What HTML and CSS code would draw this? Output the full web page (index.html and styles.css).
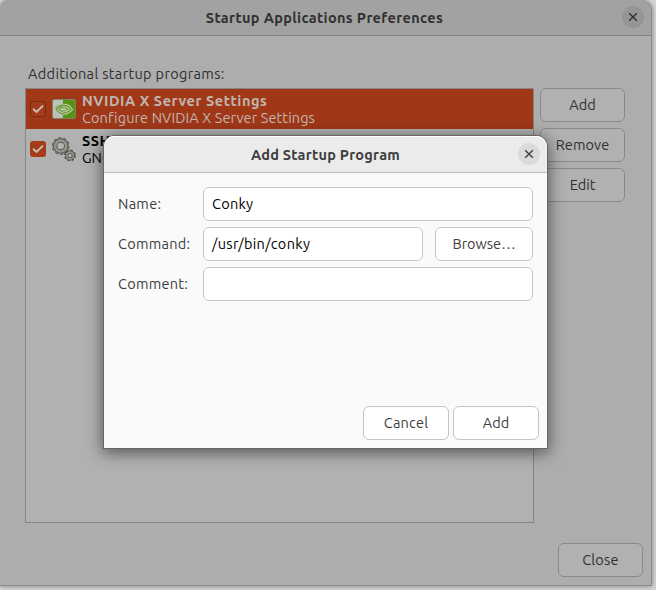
FILE: index.html
```html
<!DOCTYPE html>
<html lang="en">
<head>
<meta charset="utf-8">
<title>Startup Applications Preferences</title>
<link rel="stylesheet" href="styles.css">
</head>
<body>
<main class="window">
  <header class="titlebar">
    <h1><span class="t-main">Startup Applications Preferences</span></h1>
    <button class="close" aria-label="Close window"><svg viewBox="0 0 10 10"><path d="M1.2 1.2l7.6 7.6M8.8 1.2L1.2 8.8"/></svg></button>
  </header>
  <section class="content">
    <p class="list-label"><span class="t-label">Additional startup programs:</span></p>
    <div class="columns">
      <div class="list">
        <div class="row selected">
          <span class="check"><svg viewBox="0 0 16 16"><path d="M3 7.7l3.5 3.2L13 4.6"/></svg></span>
          <svg class="app-icon" viewBox="0 0 24 24">
            <rect x=".5" y="2.5" width="23" height="19" rx="1.8" fill="#bdc2b8"/>
            <path d="M11 3h11q1.500 0 1.500 1.500v15q0 1.500-1.500 1.500H11z" fill="#559310"/>
            <rect x=".5" y="2.500" width="23" height="19" rx="1.800" fill="none" stroke="#7a8468"/>
            <g fill="none" stroke-width="1.300">
              <path stroke="#6b9c33" d="M11 8Q6 9 4 11.500Q6 16 11 17M11 10Q8.300 10.300 7 11.700Q8.500 14.500 11 14.700"/>
              <path stroke="#b4c59c" d="M11 7.500Q17 6.500 20.500 12.500Q16 17.500 11 17M11 9.800Q15 9.500 17.500 12Q14.500 15.500 11 14.700M11 11.800q2.300-.4 3 .7-1.400 1.200-3 .3"/>
            </g>
          </svg>
          <div class="text"><b class="t-nv">NVIDIA X Server Settings</b><span class="t-conf">Configure NVIDIA X Server Settings</span></div>
        </div>
        <div class="row">
          <span class="check"><svg viewBox="0 0 16 16"><path d="M3 7.700l3.500 3.200L13 4.600"/></svg></span>
          <svg class="app-icon" viewBox="0 0 24 24" fill="none">
            <circle cx="8.700" cy="9" r="7.700" stroke="#51514f" stroke-width="2.200" stroke-dasharray="2.900 1.938"/>
            <circle cx="8.700" cy="9" r="5.500" stroke="#555553" stroke-width="4.400"/>
            <circle cx="8.700" cy="9" r="5.500" stroke="#96968c" stroke-width="2.500"/>
            <circle cx="8.700" cy="9" r="7.500" stroke="#8a8a82" stroke-width="1" stroke-dasharray="1.500 3.212" stroke-dashoffset="-.7"/>
            <circle cx="18" cy="18.500" r="5" stroke="#51514f" stroke-width="1.900" stroke-dasharray="2.200 1.727"/>
            <circle cx="18" cy="18.500" r="3.400" stroke="#555553" stroke-width="3.200"/>
            <circle cx="18" cy="18.500" r="3.400" stroke="#96968c" stroke-width="1.600"/>
          </svg>
          <div class="text"><b class="t-ssh">SSH Key Agent</b><span class="t-gn">GNOME Keyring: SSH Agent</span></div>
        </div>
      </div>
      <div class="actions">
        <button class="btn"><span>Add</span></button>
        <button class="btn"><span class="t-remove">Remove</span></button>
        <button class="btn"><span>Edit</span></button>
      </div>
    </div>
    <footer class="footer"><button class="btn"><span class="t-close">Close</span></button></footer>
  </section>
</main>
<section class="dialog" role="dialog" aria-label="Add Startup Program">
  <header class="titlebar">
    <h1><span class="t-dialog">Add Startup Program</span></h1>
    <button class="close" aria-label="Close dialog"><svg viewBox="0 0 10 10"><path d="M1.200 1.200l7.600 7.600M8.800 1.200L1.200 8.800"/></svg></button>
  </header>
  <div class="form">
    <label><span class="t-field">Name:</span></label><div class="field wide"><span class="t-field">Conky</span></div>
    <label><span class="t-field">Command:</span></label><div class="field"><span class="t-path">/usr/bin/conky</span></div><button class="btn"><span>Browse…</span></button>
    <label><span class="t-field">Comment:</span></label><div class="field wide"></div>
  </div>
  <footer class="dialog-actions"><button class="btn"><span class="t-cancel">Cancel</span></button><button class="btn"><span>Add</span></button></footer>
</section>
</body>
</html>
```
FILE: styles.css
```css
* { box-sizing: border-box; }
body {
  margin: 0;
  width: 656px;
  height: 590px;
  overflow: hidden;
  background: #d5d5d5;
  font: 14.5px/17px Ubuntu, "Noto Sans", sans-serif;
  color: #303030;
}
h1, p { margin: 0; }
button { font: inherit; color: inherit; padding: 0; }
span, b { white-space: nowrap; }
.window {
  width: 652px;
  height: 586px;
  background: #adadad;
  border: solid #898989;
  border-width: 0 1px 1px 0;
  border-radius: 9px 11px 0 0;
  box-shadow: 0 0 5px #777;
}
.titlebar {
  position: relative;
  height: 36px;
  display: flex;
  align-items: center;
  justify-content: center;
  background: #a2a2a2;
  border-bottom: 1px solid #858585;
  border-radius: 9px 11px 0 0;
}
h1 { font-size: 14.5px; line-height: 18px; }
.window h1 { margin-right: 2px; }
.close {
  position: absolute;
  right: 7px;
  top: 6px;
  width: 22px;
  height: 22px;
  border: 0;
  border-radius: 50%;
  background: #959595;
  display: grid;
  place-items: center;
}
.close svg { width: 10px; height: 10px; fill: none; stroke: #303030; stroke-width: 1.4; }
.content { padding: 29px 8px 0 25px; }
.list-label { padding-left: 3px; height: 23px; line-height: 18px; }
.columns { display: flex; gap: 6px; }
.list {
  width: 509px;
  height: 435px;
  border: 1px solid #858585;
  background: #b1b1b1;
  color: #000;
}
.row { height: 40px; display: flex; align-items: center; padding-left: 4px; }
.selected { background: #a03818; color: #c0b5b0; }
.check {
  width: 16px;
  height: 16px;
  border-radius: 3px;
  background: #a63b19;
  margin-right: 6px;
}
.selected .check { box-shadow: 0 0 0 1px #772b14 inset; }
.check svg { display: block; fill: none; stroke: #c6bdb9; stroke-width: 2; }
.app-icon { width: 24px; height: 24px; margin-right: 6px; }
.text { display: flex; flex-direction: column; align-items: flex-start; }
.actions { display: flex; flex-direction: column; gap: 6px; }
.btn {
  width: 85px;
  height: 34px;
  border: 1px solid #898989;
  border-radius: 6px;
  background: #b1b1b1;
  display: flex;
  align-items: center;
  justify-content: center;
  padding-bottom: 2px;
}
.footer { display: flex; justify-content: flex-end; margin-top: 20px; }
.dialog {
  position: absolute;
  left: 104px;
  top: 136px;
  width: 443px;
  height: 312px;
  background: #fafafa;
  border-radius: 11px 11px 0 0;
  box-shadow: 0 0 0 1px #666, 0 3px 16px 2px rgba(0, 0, 0, .5);
  color: #3d3d3d;
}
.dialog .titlebar {
  height: 37px;
  padding-top: 2px;
  background: #ebebeb;
  border-color: #bdbdbd;
  border-radius: 11px 11px 0 0;
  box-shadow: inset 0 1px #fff;
}
.dialog .close { top: 7px; background: #dadada; }
.dialog .close svg { stroke: #3d3d3d; }
.form {
  display: grid;
  grid-template-columns: 85px 220px 110px;
  grid-template-rows: repeat(3, 34px);
  row-gap: 6px;
  padding: 14px 14px 0;
}
.form label { display: flex; align-items: center; padding-bottom: 2px; }
.field {
  border: 1px solid #c5c5c5;
  border-radius: 6px;
  background: #fff;
  color: #000;
  display: flex;
  align-items: center;
  padding: 0 0 2px 8px;
}
.wide { grid-column: 2 / 4; }
.dialog .btn { background: #fff; border-color: #c5c5c5; }
.form .btn { width: 98px; margin-left: 12px; }
.dialog-actions { display: flex; justify-content: flex-end; gap: 4px; padding: 105px 8px 0 0; }
.dialog-actions .btn { width: 86px; }
.t-main { letter-spacing: .36px; }
.t-label { letter-spacing: .34px; }
.t-nv, .t-ssh { letter-spacing: .55px; }
.t-conf { letter-spacing: .1px; }
.t-dialog { letter-spacing: .25px; }
.t-field { letter-spacing: .28px; }
.t-path { letter-spacing: .34px; }
.t-remove { letter-spacing: .1px; }
.t-close, .t-cancel { letter-spacing: .2px; }
```
